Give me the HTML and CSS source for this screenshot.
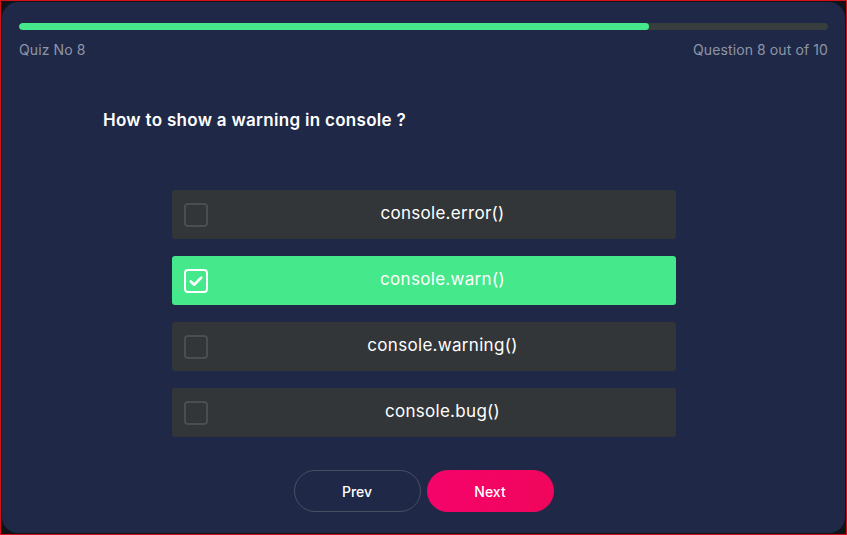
FILE: index.html
```html
<!DOCTYPE html>
<html lang="en">
<head>
<meta charset="utf-8">
<title>Quiz</title>
<link rel="stylesheet" href="styles.css">
</head>
<body>
<div class="frame">
  <main class="card">
    <div class="progress"><div class="progress-fill" style="width: 77.9%"></div></div>
    <div class="meta">
      <span>Quiz No 8</span>
      <span>Question 8 out of 10</span>
    </div>
    <h1 class="question">How to show a warning in console ?</h1>
    <ul class="options">
      <li class="option"><span class="box"></span><span class="label">console.error()</span></li>
      <li class="option selected"><span class="box"><svg viewBox="0 0 24 24" width="18" height="18"><path d="M5 12.5l4.5 4.5L19 7.5" fill="none" stroke="#fff" stroke-width="3.6" stroke-linecap="round" stroke-linejoin="round"/></svg></span><span class="label">console.warn()</span></li>
      <li class="option"><span class="box"></span><span class="label">console.warning()</span></li>
      <li class="option"><span class="box"></span><span class="label">console.bug()</span></li>
    </ul>
    <div class="nav">
      <button class="btn prev">Prev</button>
      <button class="btn next">Next</button>
    </div>
  </main>
</div>
</body>
</html>
```

FILE: styles.css
```css
* { box-sizing: border-box; }
html, body { margin: 0; padding: 0; }
body {
  width: 847px;
  height: 535px;
  background: #111318;
  font-family: "Inter", "Open Sans", sans-serif;
}
.frame {
  height: 100%;
  border: 1px solid #d4101a;
  padding: 1px;
}
.card {
  height: 100%;
  background: #1f2947;
  border-radius: 16px;
  padding: 21px 17px 0 17px;
  display: flex;
  flex-direction: column;
}
.progress {
  height: 7px;
  background: #383d3e;
  border-radius: 4px;
  overflow: hidden;
}
.progress-fill {
  height: 100%;
  background: #45e88a;
  border-radius: 4px;
}
.meta {
  display: flex;
  justify-content: space-between;
  margin-top: 11px;
  color: #8f95a6;
  font-size: 14px;
  letter-spacing: 0.1px;
  line-height: 18px;
}
.question {
  margin: 50px 0 0 84px;
  color: #fff;
  font-size: 17px;
  font-weight: 600;
  line-height: 22px;
  letter-spacing: 0.3px;
}
.options {
  list-style: none;
  margin: 59px auto 0;
  padding: 0;
  width: 504px;
  display: flex;
  flex-direction: column;
  gap: 17px;
}
.option {
  height: 49px;
  background: #333639;
  border-radius: 3px;
  display: flex;
  align-items: center;
  padding: 0 12px;
}
.option.selected { background: #45e88a; }
.box {
  width: 24px;
  height: 24px;
  border: 2px solid #4a4d51;
  border-radius: 4px;
  display: flex;
  align-items: center;
  justify-content: center;
  flex-shrink: 0;
}
.selected .box { border: 2.5px solid #fff; }
.label {
  flex: 1;
  text-align: center;
  color: #fff;
  font-size: 17px;
  font-weight: 400;
  letter-spacing: 0.3px;
  margin-top: -4px;
  padding-left: 14px;
}
.nav {
  display: flex;
  justify-content: center;
  gap: 6px;
  margin-top: 33px;
}
.btn {
  width: 127px;
  height: 42px;
  border-radius: 21px;
  font-family: inherit;
  font-size: 14px;
  font-weight: 500;
  color: #fff;
  cursor: pointer;
}
.prev {
  background: transparent;
  border: 1px solid #474f63;
}
.next {
  background: linear-gradient(90deg, #f5036a, #f0065c);
  border: none;
}
```
